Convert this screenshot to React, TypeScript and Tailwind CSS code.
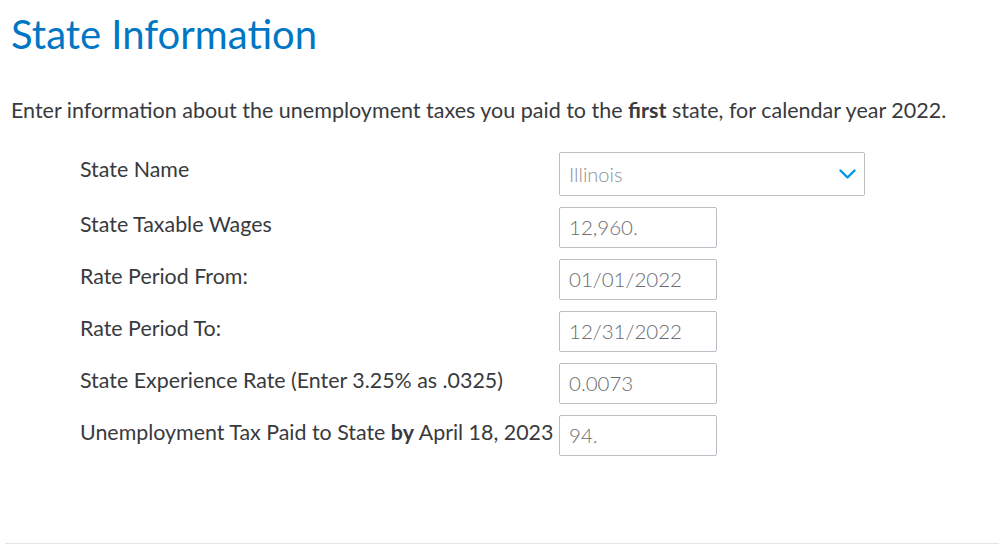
import React from "react";

const rows = [
  { label: <>State Taxable Wages</>, value: "12,960." },
  { label: <>Rate Period From:</>, value: "01/01/2022" },
  { label: <>Rate Period To:</>, value: "12/31/2022" },
  { label: <>State Experience Rate (Enter 3.25% as .0325)</>, value: "0.0073" },
  {
    label: (
      <>
        Unemployment Tax Paid to State <b className="font-bold">by</b> April 18, 2023
      </>
    ),
    value: "94.",
  },
];

export default function App() {
  return (
    <div className="w-[999px] h-[560px] bg-white text-[#393a3d] font-['Lato',sans-serif] overflow-hidden">
      <div className="pl-[11px] pt-[11px]">
        <h1 className="text-[40px] leading-[46px] text-[#0077c5] font-normal">State Information</h1>
        <p className="mt-[39px] text-[21.5px] leading-[28px]">
          Enter information about the unemployment taxes you paid to the <b className="font-bold">first</b> state, for calendar year 2022.
        </p>
      </div>

      <div className="pl-[80px] mt-[28px] flex flex-col gap-[11px]">
        <div className="flex">
          <div className="w-[479px] text-[21.4px] leading-[28px] pt-[3px]">State Name</div>
          <div className="w-[306px] h-[44px] border border-[#babec5] rounded-[2px] flex items-center justify-between pl-[9px] pr-[8px]">
            <span className="text-[20px] text-[#8d9096] font-light">Illinois</span>
            <svg width="17" height="10" viewBox="0 0 17 10" fill="none" stroke="#0097e6" strokeWidth="2.4" strokeLinecap="round" strokeLinejoin="round">
              <path d="M1.5 1.5l7 7 7-7" />
            </svg>
          </div>
        </div>
        {rows.map((r, i) => (
          <div key={i} className="flex">
            <div className="w-[479px] text-[21.4px] leading-[28px] pt-[3px] whitespace-nowrap">{r.label}</div>
            <div className="w-[158px] h-[41px] border border-[#babec5] rounded-[2px] flex items-center pl-[9px]">
              <span className="text-[20.5px] text-[#6b6c72] font-light">{r.value}</span>
            </div>
          </div>
        ))}
      </div>

      <div className="mt-[87px] ml-[5px] border-t border-[#e5e5e5]" />
    </div>
  );
}
